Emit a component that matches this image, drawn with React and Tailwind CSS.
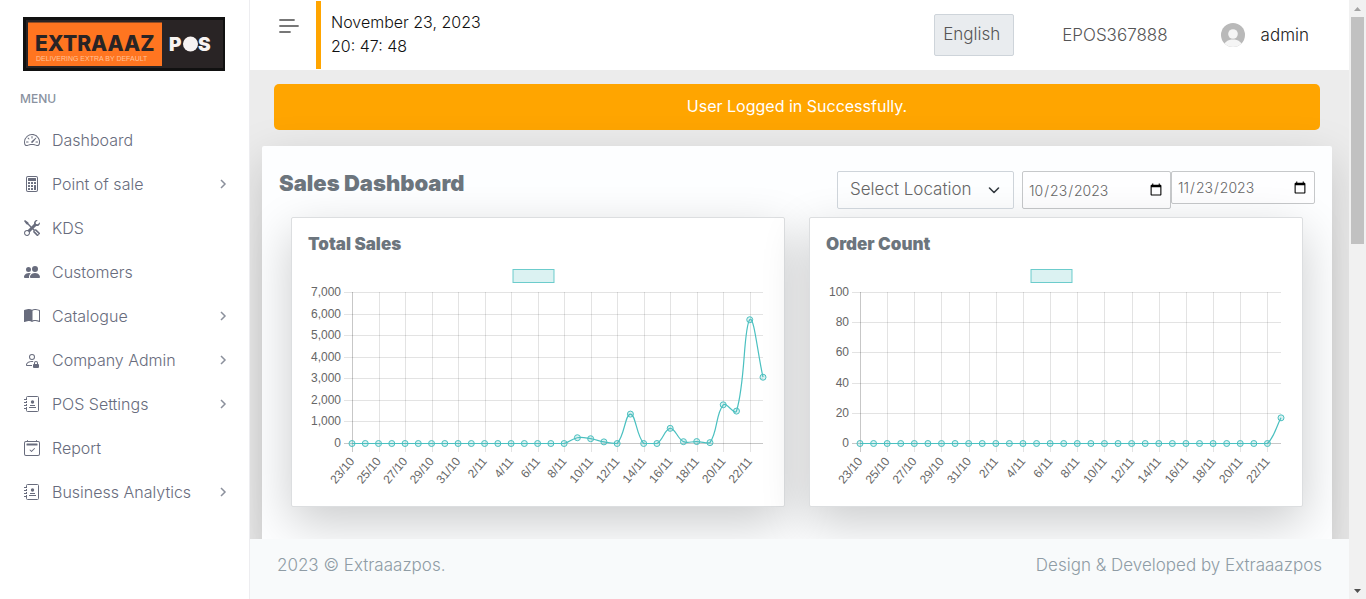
import React from "react";
import {
  BsSpeedometer2,
  BsCalculator,
  BsTools,
  BsPeopleFill,
  BsBookHalf,
  BsPersonLock,
  BsCalendar2Check,
} from "react-icons/bs";

function ContactBook({ className }) {
  return (
    <svg viewBox="0 0 16 16" className={className} fill="none" stroke="currentColor" aria-hidden="true">
      <path d="M2.5 3V1.5a1 1 0 0 1 1-1h10a1 1 0 0 1 1 1v13a1 1 0 0 1-1 1h-10a1 1 0 0 1-1-1V13" />
      <path d="M2.5 5v1M2.5 8v1M2.5 11v1M0 3.500h3M0 6.500h3M0 9.500h3M0 12.500h3" />
      <circle cx="8.5" cy="6" r="1.7" fill="currentColor" stroke="none" />
      <path d="M6 9.5h5M5 11.500h7" />
    </svg>
  );
}

const menu = [
  { label: "Dashboard", Icon: BsSpeedometer2 },
  { label: "Point of sale", Icon: BsCalculator, more: true },
  { label: "KDS", Icon: BsTools },
  { label: "Customers", Icon: BsPeopleFill },
  { label: "Catalogue", Icon: BsBookHalf, more: true },
  { label: "Company Admin", Icon: BsPersonLock, more: true },
  { label: "POS Settings", Icon: ContactBook, more: true },
  { label: "Report", Icon: BsCalendar2Check },
  { label: "Business Analytics", Icon: ContactBook, more: true },
];

const days = Array.from({ length: 32 }, (_, i) => (i < 9 ? `${23 + i}/10` : `${i - 8}/11`));
const sales = [
  ...Array(17).fill(0),
  268, 222, 75, 0, 1363, 0, 0, 702, 85, 90, 40, 1793, 1502, 5738, 3072,
];
const orders = [...Array(31).fill(0), 17];

const TOP = 30;
const BOTTOM = 181;
const RIGHT = 455;

function linePath(pts) {
  const clamp = (v) => Math.max(TOP, Math.min(BOTTOM, v));
  const ctrl = pts.map((p, i) => {
    const a = pts[i - 1] || p;
    const b = pts[i + 1] || p;
    const d1 = Math.hypot(p[0] - a[0], p[1] - a[1]);
    const d2 = Math.hypot(b[0] - p[0], b[1] - p[1]);
    const f1 = (0.4 * d1) / (d1 + d2);
    const f2 = (0.4 * d2) / (d1 + d2);
    return [
      [p[0] - f1 * (b[0] - a[0]), clamp(p[1] - f1 * (b[1] - a[1]))],
      [p[0] + f2 * (b[0] - a[0]), clamp(p[1] + f2 * (b[1] - a[1]))],
    ];
  });
  return pts
    .map((p, i) => (i === 0 ? `M${p}` : `C${ctrl[i - 1][1]} ${ctrl[i][0]} ${p}`))
    .join(" ");
}

function LineChart({ title, values, max, step, left }) {
  const x = (i) => left + (i * (RIGHT - left)) / (values.length - 1);
  const y = (v) => BOTTOM - (v / max) * (BOTTOM - TOP);
  const pts = values.map((v, i) => [x(i), y(v)]);
  const ticks = Array.from({ length: max / step + 1 }, (_, i) => i * step);
  return (
    <svg
      viewBox="0 0 460 228"
      className="block w-full font-['Liberation_Sans',Arial,sans-serif] text-[12px]"
      role="img"
      aria-label={title}
    >
      <rect x="205" y="7.5" width="41" height="13" fill="#4bc0c0" fillOpacity="0.2" stroke="#4bc0c0" strokeOpacity="0.8" />
      {ticks.map((t) => (
        <g key={t}>
          <line
            x1={left - 8}
            x2={RIGHT}
            y1={Math.round(y(t)) + 0.5}
            y2={Math.round(y(t)) + 0.5}
            stroke="#000"
            strokeOpacity={t === 0 ? 0.22 : 0.11}
          />
          <text x={left - 11} y={Math.round(y(t)) + (t === 0 ? 4 : 3.5)} textAnchor="end" fill="#666">
            {t.toLocaleString("en-US")}
          </text>
        </g>
      ))}
      {days.map((d, i) =>
        i % 2 === 0 ? (
          <g key={d}>
            <line
              x1={Math.round(x(i)) + 0.5}
              x2={Math.round(x(i)) + 0.5}
              y1={TOP}
              y2={BOTTOM + 9}
              stroke="#000"
              strokeOpacity={i === 0 ? 0.22 : 0.11}
            />
            <text
              transform={`translate(${x(i)} 197) rotate(-50)`}
              textAnchor="end"
              dy="4"
              fill="#666"
            >
              {d}
            </text>
          </g>
        ) : null
      )}
      <g transform="translate(0 0.5)">
        <path d={linePath(pts)} fill="none" stroke="#4bc0c0" strokeWidth="1.2" />
        {pts.map(([px, py], i) => (
          <circle key={i} cx={px} cy={py} r="3" fill="#4bc0c0" fillOpacity="0.2" stroke="#4bc0c0" />
        ))}
      </g>
    </svg>
  );
}

function ChartCard(props) {
  return (
    <section className="min-w-0 flex-1 rounded-xs border border-[#dcdee0] bg-white px-4 pt-4 pb-4 shadow-[0_16px_48px_rgba(0,0,0,0.2)]">
      <h2 className="mb-2 text-[17px] leading-5 font-black text-[#6c757d]">{props.title}</h2>
      <LineChart {...props} />
    </section>
  );
}

function Logo() {
  return (
    <svg viewBox="0 0 202 54" className="block w-[202px]" role="img" aria-label="Extraaaz POS">
      <rect width="202" height="54" fill="#111" />
      <rect x="3" y="3" width="197" height="48" fill="#292425" />
      <rect x="5" y="5.500" width="134" height="43.500" fill="#ff7520" />
      <text x="12" y="34" className="text-[21px] font-extrabold" fill="#292425">EXTRAAAZ</text>
      <text x="13" y="44" className="font-['Liberation_Sans'] text-[7px]" fill="#ffc39a">DELIVERING EXTRA BY DEFAULT</text>
      <text x="146" y="34" className="text-[19px] font-black" fill="#f7f3f2">P</text>
      <circle cx="167.500" cy="27" r="7.500" fill="#f7f3f2" />
      <text x="175" y="34" className="text-[19px] font-black" fill="#f7f3f2">S</text>
    </svg>
  );
}

function Sidebar() {
  return (
    <aside className="w-[250px] shrink-0 border-r border-[#ededf0] bg-white">
      <a href="#home" className="block pt-[17px] pl-[23px]">
        <Logo />
      </a>
      <p className="mt-[18px] pl-5 text-[12px] leading-5 font-medium text-[#8a929f]">MENU</p>
      <nav className="mt-[9px]">
        <ul>
          {menu.map(({ label, Icon, more }) => (
            <li key={label}>
              <a href="#menu" className="flex h-11 items-center pr-[21px] pl-6 text-[#686c7d]">
                <Icon className="h-4 w-4 shrink-0" />
                <span className="ml-3 flex-1 text-[16px] leading-6 font-light">{label}</span>
                {more && (
                  <svg viewBox="0 0 10 10" className="h-[10px] w-[10px]" fill="none" stroke="#8b909c" strokeWidth="1.500" aria-hidden="true">
                    <path d="M3 1l4 4-4 4" />
                  </svg>
                )}
              </a>
            </li>
          ))}
        </ul>
      </nav>
    </aside>
  );
}

function Header() {
  return (
    <header className="flex h-[70px] shrink-0 items-center bg-white pr-10">
      <button type="button" aria-label="Toggle menu" className="mb-[18px] ml-[29px]">
        <svg viewBox="0 0 20 14" className="block w-5" stroke="#777" strokeWidth="1.800" strokeLinecap="round">
          <path d="M1 1h14M1 7h18M1 13h10" />
        </svg>
      </button>
      <div className="ml-[17px] h-[68px] border-l-[5px] border-[#ffa500] pt-[9px] pl-[10px] text-[16px] leading-6 font-light text-[#111]">
        <p>November 23, 2023</p>
        <p>20: 47: 48</p>
      </div>
      <button
        type="button"
        className="ml-auto h-[42px] w-20 rounded-xs border border-[#ced4da] bg-[#e9ecef] px-2 text-left text-[17px] font-light text-[#555]"
      >
        English
      </button>
      <span className="ml-12 text-[17px] leading-6 font-light text-[#555]">EPOS367888</span>
      <button type="button" className="ml-[53px] flex items-center text-[17px] leading-6 font-light text-[#222]">
        <svg viewBox="0 0 24 24" className="mr-4 h-6 w-6" aria-hidden="true">
          <clipPath id="avatar"><circle cx="12" cy="12" r="12" /></clipPath>
          <g clipPath="url(#avatar)">
            <rect width="24" height="24" fill="#b9b9b9" />
            <circle cx="12" cy="11" r="4.800" fill="#f5f5f5" />
            <path d="M2 24c1-5 5-7.500 10-7.500S21 19 22 24z" fill="#f5f5f5" />
          </g>
        </svg>
        admin
      </button>
    </header>
  );
}

function Filters() {
  return (
    <form className="flex items-start text-[#666]">
      <div className="relative mr-2">
        <select
          aria-label="Select Location"
          className="h-[38px] w-[177px] appearance-none rounded-xs border border-[#ced4da] bg-transparent pl-3 text-[17px] font-light"
        >
          <option>Select Location</option>
        </select>
        <svg viewBox="0 0 12 12" className="pointer-events-none absolute top-[13px] right-[14px] h-3 w-3" fill="none" stroke="#343a40" strokeWidth="1.600" strokeLinecap="round" strokeLinejoin="round" aria-hidden="true">
          <path d="M1.500 4L6 8.500 10.500 4" />
        </svg>
      </div>
      <input
        type="date"
        aria-label="From date"
        defaultValue="2023-10-23"
        className="h-[38px] w-[149px] rounded-xs border border-[#c6c8ca] bg-white/40 px-[5px] text-[14px] font-light"
      />
      <input
        type="date"
        aria-label="To date"
        defaultValue="2023-11-23"
        className="h-[33px] w-36 rounded-xs border border-[#c6c8ca] bg-white/40 px-[5px] text-[14px] font-light"
      />
    </form>
  );
}

function ScrollRail() {
  return (
    <div className="flex w-[17px] shrink-0 flex-col items-center bg-[#f1f1f1]" aria-hidden="true">
      <svg viewBox="0 0 17 17" className="w-[17px]"><path d="M5 11h7L8.500 7z" fill="#a3a3a3" /></svg>
      <div className="h-[227px] w-[13px] bg-[#c1c1c1]" />
      <svg viewBox="0 0 17 17" className="mt-auto w-[17px]"><path d="M5 7h7L8.500 11z" fill="#505050" /></svg>
    </div>
  );
}

export default function App() {
  return (
    <div className="flex h-screen overflow-hidden bg-[#ececec] font-['Inter','Open_Sans',sans-serif]">
      <Sidebar />
      <div className="flex min-w-0 flex-1 flex-col">
        <Header />
        <main className="min-h-0 flex-1 overflow-hidden pt-[14px] pr-[17px] pl-3">
          <div className="px-3">
            <p role="status" className="rounded-[5px] bg-[#ffa500] pt-[10px] pb-3 text-center text-[16px] leading-6 text-white">
              User Logged in Successfully.
            </p>
          </div>
          <div className="mt-4 rounded-xs bg-[#fdfeff] pb-16 shadow-[0_16px_48px_rgba(0,0,0,0.175)]">
            <div className="flex items-start justify-between px-[17px] pt-[25px]">
              <h1 className="text-[22px] leading-6 font-black text-[#6c757d]">Sales Dashboard</h1>
              <Filters />
            </div>
            <div className="mt-2 flex gap-6 px-[29px]">
              <ChartCard title="Total Sales" values={sales} max={7000} step={1000} left={44} />
              <ChartCard title="Order Count" values={orders} max={100} step={20} left={34} />
            </div>
          </div>
        </main>
        <footer className="flex h-[60px] shrink-0 items-start justify-between bg-[#f8fafb] px-[27px] pt-[14px] text-[17px] leading-6 font-light text-[#8f9ca5]">
          <span>2023 © Extraaazpos.</span>
          <span>Design &amp; Developed by Extraaazpos</span>
        </footer>
      </div>
      <ScrollRail />
    </div>
  );
}
